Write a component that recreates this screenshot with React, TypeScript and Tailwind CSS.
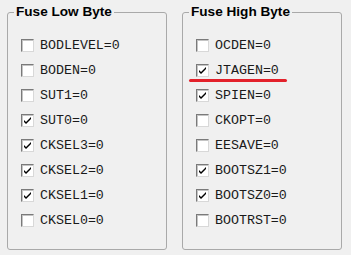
import React from 'react';

type Fuse = { name: string; checked: boolean; marked?: boolean };

const lowByte: Fuse[] = [
  { name: 'BODLEVEL=0', checked: false },
  { name: 'BODEN=0', checked: false },
  { name: 'SUT1=0', checked: false },
  { name: 'SUT0=0', checked: true },
  { name: 'CKSEL3=0', checked: true },
  { name: 'CKSEL2=0', checked: true },
  { name: 'CKSEL1=0', checked: true },
  { name: 'CKSEL0=0', checked: false },
];

const highByte: Fuse[] = [
  { name: 'OCDEN=0', checked: false },
  { name: 'JTAGEN=0', checked: true, marked: true },
  { name: 'SPIEN=0', checked: true },
  { name: 'CKOPT=0', checked: false },
  { name: 'EESAVE=0', checked: false },
  { name: 'BOOTSZ1=0', checked: true },
  { name: 'BOOTSZ0=0', checked: true },
  { name: 'BOOTRST=0', checked: false },
];

const CheckBox = ({ checked }: { checked: boolean }) => (
  <div className="w-[13px] h-[13px] shrink-0 bg-white border border-t-[#7a7a7a] border-l-[#7a7a7a] border-b-[#d8d8d8] border-r-[#d8d8d8] shadow-[inset_1px_1px_0_#c4c4c4] flex items-center justify-center">
    {checked && (
      <svg width="9" height="9" viewBox="0 0 9 9" className="block">
        <path d="M1 4 L3 6 L8 1 L8 3 L3 8 L1 6 Z" fill="#000" />
      </svg>
    )}
  </div>
);

const FuseRow = ({ fuse }: { fuse: Fuse }) => (
  <div className="relative flex items-center h-[13px] gap-[6px]">
    <CheckBox checked={fuse.checked} />
    <span className="text-[13.3px] leading-[13px] text-[#1a1a1a] font-['Liberation_Mono',monospace]">
      {fuse.name}
    </span>
    {fuse.marked && (
      <div className="absolute left-[-7px] top-[15px] w-[98px] h-[3px] rounded-full bg-[#e3212b]" />
    )}
  </div>
);

const GroupBox = ({ title, fuses }: { title: string; fuses: Fuse[] }) => (
  <fieldset className="w-[160px] h-[246px] border border-[#a9a9a9] rounded-[3px] px-[13px]">
    <legend className="ml-[-7px] px-[2px] text-[13.6px] leading-[16px] font-bold text-black font-['Liberation_Sans',Arial,sans-serif]">
      {title}
    </legend>
    <div className="flex flex-col gap-[12px] pt-[19px]">
      {fuses.map((f) => (
        <FuseRow key={f.name} fuse={f} />
      ))}
    </div>
  </fieldset>
);

export default function App() {
  return (
    <div className="w-[351px] h-[255px] bg-[#f0f0f0] flex gap-[15px] pl-[7px] pt-[4px]">
      <GroupBox title="Fuse Low Byte" fuses={lowByte} />
      <GroupBox title="Fuse High Byte" fuses={highByte} />
    </div>
  );
}
